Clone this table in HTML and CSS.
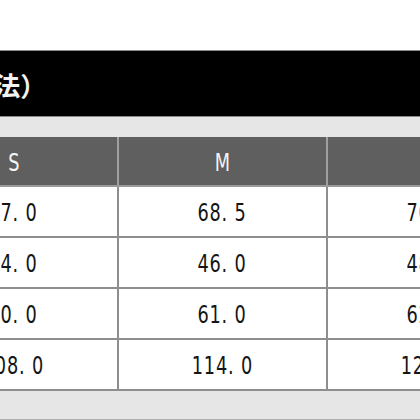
FILE: index.html
```html
<!DOCTYPE html>
<html lang="ja">
<head>
<meta charset="utf-8">
<link rel="stylesheet" href="styles.css">
</head>
<body>
<div class="page">
  <div class="band"><span class="title">サイズ（寸法）</span></div>
  <div class="strip"></div>
  <div class="grid">
    <div class="cell head"><span class="num">S</span></div>
    <div class="cell head"><span class="num">M</span></div>
    <div class="cell head"><span class="num">L</span></div>

    <div class="cell"><span class="num">67<span class="dot">.</span>0</span></div>
    <div class="cell"><span class="num">68<span class="dot">.</span>5</span></div>
    <div class="cell"><span class="num">70<span class="dot">.</span>0</span></div>

    <div class="cell"><span class="num">44<span class="dot">.</span>0</span></div>
    <div class="cell"><span class="num">46<span class="dot">.</span>0</span></div>
    <div class="cell"><span class="num">48<span class="dot">.</span>0</span></div>

    <div class="cell"><span class="num">60<span class="dot">.</span>0</span></div>
    <div class="cell"><span class="num">61<span class="dot">.</span>0</span></div>
    <div class="cell"><span class="num">62<span class="dot">.</span>0</span></div>

    <div class="cell"><span class="num">108<span class="dot">.</span>0</span></div>
    <div class="cell"><span class="num">114<span class="dot">.</span>0</span></div>
    <div class="cell"><span class="num">120<span class="dot">.</span>0</span></div>
  </div>
  <div class="strip bottom"></div>
</div>
</body>
</html>
```

FILE: styles.css
```css
html, body {
  margin: 0;
  padding: 0;
  background: #ffffff;
  overflow: hidden;
}

.page {
  width: 420px;
  height: 420px;
  overflow: hidden;
  padding-top: 50px;
  box-sizing: border-box;
}

.band {
  height: 67px;
  box-sizing: border-box;
  background: #000;
  border-top: 1px solid #8a8a8a;
  border-bottom: 1px solid #8a8a8a;
  display: flex;
  align-items: center;
  white-space: nowrap;
}

.title {
  margin-left: -135px;
  color: #f2f2f2;
  font-family: "Noto Sans CJK JP", sans-serif;
  font-weight: 700;
  font-size: 26px;
  line-height: 1;
  padding-top: 3px;
}

.strip {
  height: 20px;
  background: #e6e6e6;
}

.strip.bottom {
  height: 28px;
  border-bottom: 1px solid #b0b0b0;
}

.grid {
  display: grid;
  grid-template-columns: repeat(3, 209px);
  grid-template-rows: 50px repeat(4, 51px);
  margin-left: -90px;
  width: 627px;
}

.cell {
  box-sizing: border-box;
  border-right: 2px solid #8e8e8e;
  border-bottom: 2px solid #8e8e8e;
  display: flex;
  align-items: center;
  justify-content: center;
  font-family: "DejaVu Sans Condensed", "DejaVu Sans", sans-serif;
  font-stretch: condensed;
  font-size: 24px;
  color: #151515;
  background: #fff;
  padding-top: 2px;
  white-space: nowrap;
}

.num {
  display: inline-block;
  transform: scaleX(0.82);
  letter-spacing: 1px;
}

.cell.head {
  background: #5f5f5f;
  color: #f4f4f4;
  border-right-color: #a0a0a0;
  border-bottom-color: #9a9a9a;
  padding-top: 4px;
}

.cell.head .num {
  letter-spacing: 0;
}

.dot {
  margin-right: 8px;
}
```
